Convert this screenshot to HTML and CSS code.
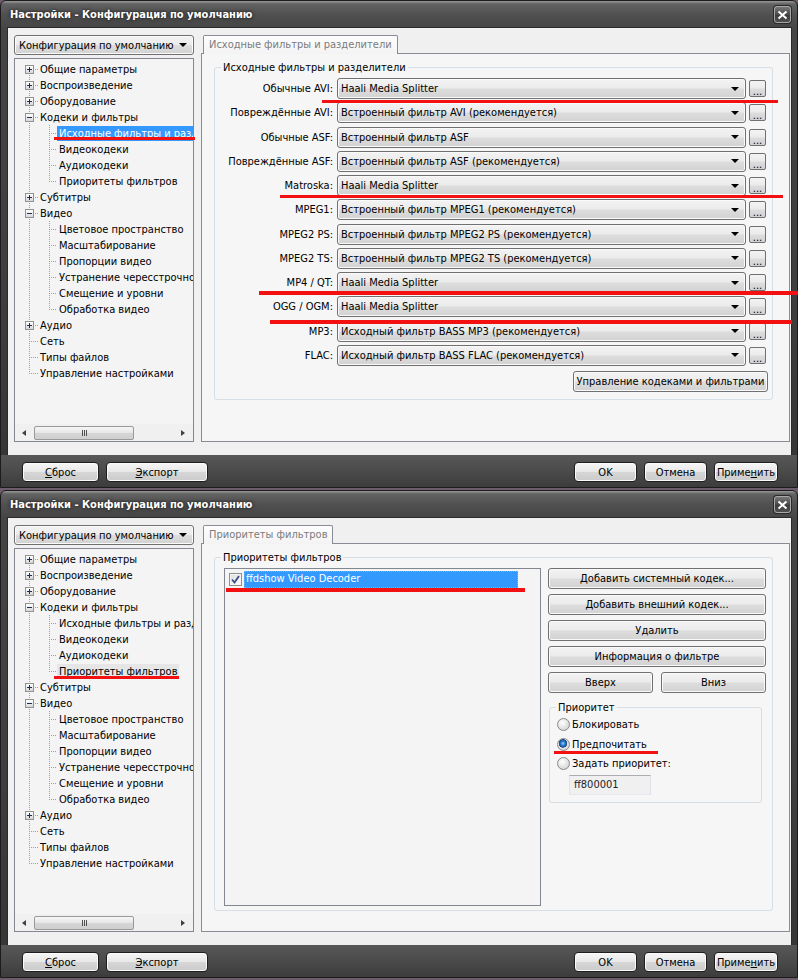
FILE: index.html
```html
<!DOCTYPE html>
<html lang="ru">
<head>
<meta charset="utf-8">
<title>Настройки - Конфигурация по умолчанию</title>
<link rel="stylesheet" href="styles.css">
</head>
<body>

<!-- Window 1: source filters page -->
<div class="win">
  <div class="titlebar">
    <span class="title">Настройки - Конфигурация по умолчанию</span>
    <span class="close"><svg width="11" height="10" viewBox="0 0 11 10"><path d="M1.5 1.5l8 7M9.5 1.5l-8 7" stroke="#fff" stroke-width="2"/></svg></span>
  </div>
  <div class="client">
    <div class="side">
      <div class="combo cfg"><span class="ctext">Конфигурация по умолчанию</span></div>
      <div class="tree">
        <div class="rows">
          <div class="row"><span class="ca first"><span class="xp plus"></span></span><span class="tx">Общие параметры</span></div>
          <div class="row"><span class="ca mid"><span class="xp plus"></span></span><span class="tx">Воспроизведение</span></div>
          <div class="row"><span class="ca mid"><span class="xp plus"></span></span><span class="tx">Оборудование</span></div>
          <div class="row"><span class="ca mid"><span class="xp minus"></span></span><span class="tx">Кодеки и фильтры</span></div>
          <div class="row"><span class="ca pass"></span><span class="cb mid"></span><span class="tx sel">Исходные фильтры и разделители</span></div>
          <div class="row"><span class="ca pass"></span><span class="cb mid"></span><span class="tx">Видеокодеки</span></div>
          <div class="row"><span class="ca pass"></span><span class="cb mid"></span><span class="tx">Аудиокодеки</span></div>
          <div class="row"><span class="ca pass"></span><span class="cb last"></span><span class="tx">Приоритеты фильтров</span></div>
          <div class="row"><span class="ca mid"><span class="xp plus"></span></span><span class="tx">Субтитры</span></div>
          <div class="row"><span class="ca mid"><span class="xp minus"></span></span><span class="tx">Видео</span></div>
          <div class="row"><span class="ca pass"></span><span class="cb mid"></span><span class="tx">Цветовое пространство</span></div>
          <div class="row"><span class="ca pass"></span><span class="cb mid"></span><span class="tx">Масштабирование</span></div>
          <div class="row"><span class="ca pass"></span><span class="cb mid"></span><span class="tx">Пропорции видео</span></div>
          <div class="row"><span class="ca pass"></span><span class="cb mid"></span><span class="tx">Устранение чересстрочности</span></div>
          <div class="row"><span class="ca pass"></span><span class="cb mid"></span><span class="tx">Смещение и уровни</span></div>
          <div class="row"><span class="ca pass"></span><span class="cb last"></span><span class="tx">Обработка видео</span></div>
          <div class="row"><span class="ca mid"><span class="xp plus"></span></span><span class="tx">Аудио</span></div>
          <div class="row"><span class="ca mid"></span><span class="tx">Сеть</span></div>
          <div class="row"><span class="ca mid"></span><span class="tx">Типы файлов</span></div>
          <div class="row"><span class="ca last"></span><span class="tx">Управление настройками</span></div>
        </div>
        <div class="hscroll">
          <span class="sarrow left"></span>
          <span class="strack"><span class="thumb"></span></span>
          <span class="sarrow right"></span>
        </div>
      </div>
    </div>
    <div class="tabs">
      <div class="tabstrip"><span class="tab">Исходные фильтры и разделители</span></div>
      <div class="panel">
        <fieldset class="group src">
          <legend>Исходные фильтры и разделители</legend>
          <div class="src-body">
            <div class="srcgrid">
              <span class="lbl">Обычные AVI:</span><div class="combo"><span class="ctext">Haali Media Splitter</span></div><button class="dots">...</button>
              <span class="lbl">Повреждённые AVI:</span><div class="combo"><span class="ctext">Встроенный фильтр AVI (рекомендуется)</span></div><button class="dots">...</button>
              <span class="lbl">Обычные ASF:</span><div class="combo"><span class="ctext">Встроенный фильтр ASF</span></div><button class="dots">...</button>
              <span class="lbl">Повреждённые ASF:</span><div class="combo"><span class="ctext">Встроенный фильтр ASF (рекомендуется)</span></div><button class="dots">...</button>
              <span class="lbl">Matroska:</span><div class="combo"><span class="ctext">Haali Media Splitter</span></div><button class="dots">...</button>
              <span class="lbl">MPEG1:</span><div class="combo"><span class="ctext">Встроенный фильтр MPEG1 (рекомендуется)</span></div><button class="dots">...</button>
              <span class="lbl">MPEG2 PS:</span><div class="combo"><span class="ctext">Встроенный фильтр MPEG2 PS (рекомендуется)</span></div><button class="dots">...</button>
              <span class="lbl">MPEG2 TS:</span><div class="combo"><span class="ctext">Встроенный фильтр MPEG2 TS (рекомендуется)</span></div><button class="dots">...</button>
              <span class="lbl">MP4 / QT:</span><div class="combo"><span class="ctext">Haali Media Splitter</span></div><button class="dots">...</button>
              <span class="lbl">OGG / OGM:</span><div class="combo"><span class="ctext">Haali Media Splitter</span></div><button class="dots">...</button>
              <span class="lbl">MP3:</span><div class="combo"><span class="ctext">Исходный фильтр BASS MP3 (рекомендуется)</span></div><button class="dots">...</button>
              <span class="lbl">FLAC:</span><div class="combo"><span class="ctext">Исходный фильтр BASS FLAC (рекомендуется)</span></div><button class="dots">...</button>
            </div>
            <div class="manage-row"><button class="btn manage">Управление кодеками и фильтрами</button></div>
          </div>
        </fieldset>
      </div>
    </div>
  </div>
  <div class="footer">
    <button class="fbtn reset"><u>С</u>брос</button>
    <button class="fbtn export"><u>Э</u>кспорт</button>
    <span class="spacer"></span>
    <button class="fbtn ok">OK</button>
    <button class="fbtn ok">Отмена</button>
    <button class="fbtn apply">Приме<u>н</u>ить</button>
  </div>
</div>

<!-- Window 2: filter priority page -->
<div class="win">
  <div class="titlebar">
    <span class="title">Настройки - Конфигурация по умолчанию</span>
    <span class="close"><svg width="11" height="10" viewBox="0 0 11 10"><path d="M1.5 1.5l8 7M9.5 1.5l-8 7" stroke="#fff" stroke-width="2"/></svg></span>
  </div>
  <div class="client">
    <div class="side">
      <div class="combo cfg"><span class="ctext">Конфигурация по умолчанию</span></div>
      <div class="tree">
        <div class="rows">
          <div class="row"><span class="ca first"><span class="xp plus"></span></span><span class="tx">Общие параметры</span></div>
          <div class="row"><span class="ca mid"><span class="xp plus"></span></span><span class="tx">Воспроизведение</span></div>
          <div class="row"><span class="ca mid"><span class="xp plus"></span></span><span class="tx">Оборудование</span></div>
          <div class="row"><span class="ca mid"><span class="xp minus"></span></span><span class="tx">Кодеки и фильтры</span></div>
          <div class="row"><span class="ca pass"></span><span class="cb mid"></span><span class="tx">Исходные фильтры и разделители</span></div>
          <div class="row"><span class="ca pass"></span><span class="cb mid"></span><span class="tx">Видеокодеки</span></div>
          <div class="row"><span class="ca pass"></span><span class="cb mid"></span><span class="tx">Аудиокодеки</span></div>
          <div class="row"><span class="ca pass"></span><span class="cb last"></span><span class="tx sel-idle">Приоритеты фильтров</span></div>
          <div class="row"><span class="ca mid"><span class="xp plus"></span></span><span class="tx">Субтитры</span></div>
          <div class="row"><span class="ca mid"><span class="xp minus"></span></span><span class="tx">Видео</span></div>
          <div class="row"><span class="ca pass"></span><span class="cb mid"></span><span class="tx">Цветовое пространство</span></div>
          <div class="row"><span class="ca pass"></span><span class="cb mid"></span><span class="tx">Масштабирование</span></div>
          <div class="row"><span class="ca pass"></span><span class="cb mid"></span><span class="tx">Пропорции видео</span></div>
          <div class="row"><span class="ca pass"></span><span class="cb mid"></span><span class="tx">Устранение чересстрочности</span></div>
          <div class="row"><span class="ca pass"></span><span class="cb mid"></span><span class="tx">Смещение и уровни</span></div>
          <div class="row"><span class="ca pass"></span><span class="cb last"></span><span class="tx">Обработка видео</span></div>
          <div class="row"><span class="ca mid"><span class="xp plus"></span></span><span class="tx">Аудио</span></div>
          <div class="row"><span class="ca mid"></span><span class="tx">Сеть</span></div>
          <div class="row"><span class="ca mid"></span><span class="tx">Типы файлов</span></div>
          <div class="row"><span class="ca last"></span><span class="tx">Управление настройками</span></div>
        </div>
        <div class="hscroll">
          <span class="sarrow left"></span>
          <span class="strack"><span class="thumb"></span></span>
          <span class="sarrow right"></span>
        </div>
      </div>
    </div>
    <div class="tabs">
      <div class="tabstrip"><span class="tab">Приоритеты фильтров</span></div>
      <div class="panel">
        <fieldset class="group prio">
          <legend>Приоритеты фильтров</legend>
          <div class="prio-body">
            <div class="list">
              <div class="item"><span class="chk"><svg width="9" height="9" viewBox="0 0 9 9"><path d="M1 4.5l2.5 3L8 1" fill="none" stroke="#3a4a8a" stroke-width="1.8"/></svg></span><span class="itx">ffdshow Video Decoder</span></div>
            </div>
            <div class="actions">
              <button class="btn">Добавить системный кодек...</button>
              <button class="btn">Добавить внешний кодек...</button>
              <button class="btn">Удалить</button>
              <button class="btn">Информация о фильтре</button>
              <div class="pair"><button class="btn">Вверх</button><button class="btn">Вниз</button></div>
              <fieldset class="group level">
                <legend>Приоритет</legend>
                <div class="radio"><span class="rb"></span>Блокировать</div>
                <div class="radio"><span class="rb on"></span>Предпочитать</div>
                <div class="radio"><span class="rb"></span>Задать приоритет:</div>
                <div class="edit">ff800001</div>
              </fieldset>
            </div>
          </div>
        </fieldset>
      </div>
    </div>
  </div>
  <div class="footer">
    <button class="fbtn reset"><u>С</u>брос</button>
    <button class="fbtn export"><u>Э</u>кспорт</button>
    <span class="spacer"></span>
    <button class="fbtn ok">OK</button>
    <button class="fbtn ok">Отмена</button>
    <button class="fbtn apply">Приме<u>н</u>ить</button>
  </div>
</div>

<!-- red marker strokes drawn over the dialogs -->
<div class="mark m-avi"></div>
<div class="mark m-tree1"></div>
<div class="mark m-mkv"></div>
<div class="mark m-mp4"></div>
<div class="mark m-ogg"></div>
<div class="mark m-ffd"></div>
<div class="mark m-tree2"></div>
<div class="mark m-pref"></div>

</body>
</html>
```

FILE: styles.css
```css
* { box-sizing: border-box; }

html, body { margin: 0; padding: 0; }

body {
  position: relative;
  width: 798px;
  height: 980px;
  overflow: hidden;
  background: #6e5c6c;
  font: 11px "DejaVu Sans Condensed", "DejaVu Sans", sans-serif;
  color: #000;
  --dv: repeating-linear-gradient(to bottom, #a0a0a0 0 1px, transparent 1px 2px);
  --dh: repeating-linear-gradient(to right, #a0a0a0 0 1px, transparent 1px 2px);
}

button {
  font: inherit;
  color: #000;
  padding: 0;
  margin: 0;
}

/* ---------- window frame ---------- */
.win {
  height: 488px;
  display: flex;
  flex-direction: column;
  border: 1px solid #1c1c1c;
  border-radius: 6px 6px 0 0;
  background: linear-gradient(to bottom, #9a9a9a 0, #626262 3px, #505050 14px, #454545 27px, #3e3e3e 60%, #353535 100%);
}
.win + .win { margin-top: 2px; }

.titlebar {
  height: 27px;
  flex: none;
  display: flex;
  align-items: center;
  padding: 0 6px 0 9px;
}
.title {
  flex: 1;
  color: #fff;
  font-weight: bold;
  font-size: 11px;
  text-shadow: 0 0 4px #222, 0 0 2px #222;
}
.close {
  width: 17px;
  height: 17px;
  display: flex;
  align-items: center;
  justify-content: center;
  border: 1px solid #a8a8a8;
  border-radius: 3px;
  background: linear-gradient(#777, #4a4a4a 50%, #3a3a3a 51%, #505050);
  box-shadow: 0 0 0 1px #2a2a2a;
}

.client {
  height: 427px;
  flex: none;
  margin: 0 6px 0 7px;
  background: #f0f0f0;
  display: flex;
  gap: 7px;
  padding: 7px 1px 13px 6px;
  box-shadow: 0 0 0 1px #2a2a2a;
}

.footer {
  flex: 1;
  display: flex;
  align-items: flex-start;
  gap: 7px;
  padding: 7px 19px 0 21px;
  background: linear-gradient(#575757, #4c4c4c 45%, #3c3c3c 100%);
}
.spacer { flex: 1; }
.fbtn {
  height: 20px;
  border: 1px solid #1e1e1e;
  border-radius: 4px;
  background: linear-gradient(#f6f6f6, #e8e8e8 48%, #d6d6d6 52%, #cbcbcb);
  box-shadow: inset 0 0 0 1px #fbfbfb;
  font-size: 11px;
}
.fbtn u { text-underline-offset: 1px; }
.reset { width: 77px; }
.export { width: 102px; }
.ok { width: 63px; }
.apply { width: 64px; }

/* ---------- left column ---------- */
.side {
  width: 180px;
  flex: none;
  display: flex;
  flex-direction: column;
  gap: 3px;
}

.combo {
  height: 20px;
  display: flex;
  align-items: center;
  padding: 0 6px 0 3px;
  border: 1px solid #707070;
  border-radius: 3px;
  background: linear-gradient(#f3f3f3, #ebebeb 48%, #dddddd 52%, #d2d2d2);
  box-shadow: inset 0 0 0 1px #fafafa;
}
.ctext {
  flex: 1;
  white-space: nowrap;
  overflow: hidden;
}
.combo::after {
  content: "";
  flex: none;
  border-left: 4px solid transparent;
  border-right: 4px solid transparent;
  border-top: 4px solid #000;
}
.cfg { padding-left: 4px; }

.tree {
  flex: 1;
  display: flex;
  flex-direction: column;
  border: 1px solid #828790;
  background: #f4f4f4;
  overflow: hidden;
}
.rows {
  flex: 1;
  padding-top: 2px;
}
.row {
  height: 16px;
  display: flex;
  align-items: center;
  white-space: nowrap;
}
.ca {
  width: 23px;
  height: 16px;
  flex: none;
  display: flex;
  align-items: center;
}
.ca.first {
  background: var(--dv) 14px 8px / 1px 8px no-repeat, var(--dh) 14px 8px / 9px 1px no-repeat;
}
.ca.mid {
  background: var(--dv) 14px 0 / 1px 16px no-repeat, var(--dh) 14px 8px / 9px 1px no-repeat;
}
.ca.last {
  background: var(--dv) 14px 0 / 1px 9px no-repeat, var(--dh) 14px 8px / 9px 1px no-repeat;
}
.ca.pass {
  width: 25px;
  background: var(--dv) 14px 0 / 1px 16px no-repeat;
}
.cb {
  width: 17px;
  height: 16px;
  flex: none;
}
.cb.mid {
  background: var(--dv) 9px 0 / 1px 16px no-repeat, var(--dh) 9px 8px / 8px 1px no-repeat;
}
.cb.last {
  background: var(--dv) 9px 0 / 1px 9px no-repeat, var(--dh) 9px 8px / 8px 1px no-repeat;
}

.xp {
  width: 9px;
  height: 9px;
  margin-left: 10px;
  border: 1px solid #919191;
}
.xp.plus {
  background:
    linear-gradient(#1e2f50, #1e2f50) center / 5px 1px no-repeat,
    linear-gradient(#1e2f50, #1e2f50) center / 1px 5px no-repeat,
    linear-gradient(#ffffff, #d8d8d8);
}
.xp.minus {
  background:
    linear-gradient(#1e2f50, #1e2f50) center / 5px 1px no-repeat,
    linear-gradient(#ffffff, #d8d8d8);
}

.tx {
  height: 15px;
  line-height: 15px;
  padding: 0 2px;
}
.tx.sel { background: #3399ff; color: #fff; }
.tx.sel-idle { background: #e6e6e6; }

.hscroll {
  height: 17px;
  flex: none;
  display: flex;
  align-items: center;
  padding: 0 8px 0 7px;
  background: #f0f0f0;
}
.sarrow {
  width: 0;
  height: 0;
  border-top: 3.5px solid transparent;
  border-bottom: 3.5px solid transparent;
}
.sarrow.left { border-right: 4px solid #404040; }
.sarrow.right { border-left: 4px solid #404040; }
.strack {
  flex: 1;
  display: flex;
  padding: 0 46px 0 8px;
}
.thumb {
  width: 100px;
  height: 14px;
  border: 1px solid #999;
  border-radius: 2px;
  background:
    repeating-linear-gradient(to right, #505050 0 1px, transparent 1px 2px) center / 5px 6px no-repeat,
    linear-gradient(to bottom, #f6f6f6, #e6e6e6 50%, #d6d6d6 51%, #cfcfcf);
}

/* ---------- tab panel ---------- */
.tabs {
  flex: 1;
  display: flex;
  flex-direction: column;
}
.tabstrip {
  height: 18px;
  flex: none;
  display: flex;
  padding-left: 2px;
}
.tab {
  height: 19px;
  padding: 0 5px;
  line-height: 18px;
  color: #7b7b7b;
  border: 1px solid #898c95;
  border-bottom: 0;
  border-radius: 2px 2px 0 0;
  background: linear-gradient(#fdfdfd, #f3f3f3);
  position: relative;
  z-index: 1;
}
.panel {
  flex: 1;
  border: 1px solid #898c95;
  background: #f6f6f6;
  padding: 7px 16px 0 12px;
}

.group {
  margin: 0;
  padding: 0;
  min-width: 0;
  border: 1px solid #d5dfe5;
  border-radius: 3px;
}
.group legend {
  padding: 0 2px;
  margin-left: 6px;
  line-height: 13px;
}

/* source filters */
.src-body { padding: 4px 4px 7px 0; }
.srcgrid {
  display: grid;
  grid-template-columns: 118px 410px 17px;
  column-gap: 3px;
  row-gap: 3.25px;
  align-items: center;
}
.srcgrid .combo { height: 21px; margin-left: 1px; }
.lbl {
  text-align: right;
  white-space: nowrap;
}
.dots {
  width: 17px;
  height: 17px;
  border: 1px solid #707070;
  border-radius: 2px;
  background: linear-gradient(#f3f3f3, #ebebeb 48%, #dddddd 52%, #d2d2d2);
  line-height: 17px;
  font-size: 11px;
  padding-top: 2px;
}
.manage-row {
  display: flex;
  justify-content: flex-end;
  padding-top: 5px;
}
.btn {
  height: 21px;
  border: 1px solid #707070;
  border-radius: 3px;
  background: linear-gradient(#f3f3f3, #ebebeb 48%, #dddddd 52%, #d2d2d2);
  box-shadow: inset 0 0 0 1px #fafafa;
}
.manage { width: 195px; }

/* filter priority */
.prio { height: 360px; }
.prio-body {
  display: flex;
  gap: 7px;
  padding: 4px 5px 0 9px;
}
.list {
  width: 317px;
  height: 338px;
  border: 1px solid #828790;
  background: #f4f4f4;
  padding: 1px 0 0 4px;
}
.item {
  display: flex;
  align-items: center;
  gap: 2px;
  height: 18px;
}
.chk {
  width: 13px;
  height: 13px;
  display: flex;
  align-items: center;
  justify-content: center;
  border: 1px solid #8f8f8f;
  background: linear-gradient(135deg, #dcdcdc, #ffffff);
  box-shadow: inset 0 0 0 1px #f4f4f4;
}
.itx {
  width: 274px;
  height: 17px;
  line-height: 16px;
  padding-left: 2px;
  color: #fff;
  background: #3399ff;
  outline: 1px dotted #7fb2e6;
  outline-offset: -1px;
}
.actions {
  width: 218px;
  display: flex;
  flex-direction: column;
  gap: 5px;
}
.pair {
  display: grid;
  grid-template-columns: 1fr 1fr;
  gap: 8px;
}
.level {
  margin: 3px 4px 0 1px;
  padding: 1px 0 7px 0;
}
.radio {
  height: 19.5px;
  display: flex;
  align-items: center;
  gap: 2px;
  padding-left: 7px;
}
.rb {
  width: 13px;
  height: 13px;
  border-radius: 50%;
  border: 1px solid #8a8a8a;
  background: radial-gradient(circle at 40% 35%, #ffffff, #d4d4d4 80%);
}
.rb.on {
  background:
    radial-gradient(circle at 45% 40%, #9fd3ff 0, #2f7fd0 2px, #144a8a 4px, transparent 4.5px),
    radial-gradient(circle at 40% 35%, #ffffff, #d4d4d4 80%);
}
.edit {
  width: 82px;
  height: 20px;
  margin: 1px 0 0 19px;
  border: 1px solid #abadb3;
  border-color: #abadb3 #dbdfe6 #e3e9ef #e2e3ea;
  background: #f0f0f0;
  line-height: 18px;
  padding-left: 4px;
  color: #222;
}

/* ---------- red marker strokes ---------- */
.mark {
  position: absolute;
  height: 3px;
  background: #f21010;
}
.m-avi { left: 322px; top: 100px; width: 456px; }
.m-tree1 { left: 54px; top: 137px; width: 141px; }
.m-mkv { left: 280px; top: 195px; width: 503px; }
.m-mp4 { left: 259px; top: 291px; width: 539px; height: 4px; }
.m-ogg { left: 270px; top: 320px; width: 522px; height: 4px; }
.m-ffd { left: 226px; top: 588px; width: 299px; height: 4px; }
.m-tree2 { left: 54px; top: 676px; width: 125px; }
.m-pref { left: 554px; top: 751px; width: 104px; }
```
